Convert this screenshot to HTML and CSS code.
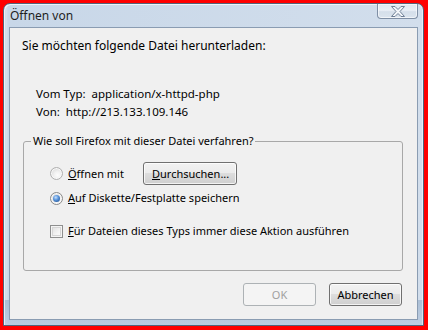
FILE: index.html
```html
<!DOCTYPE html>
<html lang="de">
<head>
<meta charset="utf-8">
<title>Öffnen von</title>
<link rel="stylesheet" href="styles.css">
</head>
<body>
<div class="window">
  <div class="titlebar">
    <span class="title">Öffnen von</span>
    <button class="close" aria-label="Schließen">
      <svg width="14" height="11" viewBox="0 0 14 11"><polygon points="0.5,0.5 4,0.5 7,3.5 10,0.5 13.5,0.5 9,5.5 13.5,10.5 10,10.5 7,7.5 4,10.5 0.5,10.5 5,5.5" fill="#f3f6fa" stroke="#6f7f95" stroke-width="1" stroke-linejoin="round"/></svg>
    </button>
  </div>
  <div class="client">
    <p class="intro">Sie möchten folgende Datei herunterladen:</p>
    <div class="info">
      <div class="info-row"><span>Vom Typ:</span><span>application/x-httpd-php</span></div>
      <div class="info-row"><span>Von:</span><span>http://213.133.109.146</span></div>
    </div>
    <fieldset class="group">
      <legend>Wie soll Firefox mit dieser Datei verfahren?</legend>
      <div class="opts">
        <div class="opt opt-first">
          <span class="radio"></span>
          <span class="opt-label wide"><u>Ö</u>ffnen mit</span>
          <button class="btn browse"><u>D</u>urchsuchen...</button>
        </div>
        <div class="opt opt-second">
          <span class="radio checked"></span>
          <span class="opt-label"><u>A</u>uf Diskette/Festplatte speichern</span>
        </div>
        <div class="opt opt-third">
          <span class="check"></span>
          <span class="opt-label"><u>F</u>ür Dateien dieses Typs immer diese Aktion ausführen</span>
        </div>
      </div>
    </fieldset>
    <div class="actions">
      <button class="btn action" disabled>OK</button>
      <button class="btn action">Abbrechen</button>
    </div>
  </div>
</div>
</body>
</html>
```
FILE: styles.css
```css
* { box-sizing: border-box; }
html, body { margin: 0; }
body {
  background: #f00;
  padding: 3px 4px 4px 3px;
  font: 11px/16px "Noto Sans", "Open Sans", sans-serif;
  color: #000;
  height: 330px;
}
.window {
  width: 421px;
  height: 323px;
  border: 1px solid #51647c;
  border-radius: 7px 7px 0 0;
  background:
    linear-gradient(to bottom, rgba(255,255,255,0) 0, rgba(255,255,255,0) 296px, rgba(140,165,195,0.55) 296px, rgba(175,195,218,0.6) 100%),
    linear-gradient(to right, #bccde2 0, #d7e2ef 2px, #c8d7e8 4px, #d2deec 100%);
  padding: 0 5px 5px 5px;
  display: flex;
  flex-direction: column;
  box-shadow: inset 1px 1px 0 rgba(255,255,255,0.7), inset -1px 0 0 rgba(255,255,255,0.5);
}
.titlebar {
  height: 23px;
  display: flex;
  justify-content: space-between;
  align-items: flex-start;
  flex: none;
}
.title {
  padding: 4px 0 0 1px;
  font-size: 12px;
  color: #1e1e1e;
}
.close {
  width: 41px;
  height: 15px;
  margin: 0;
  padding: 0;
  border: 1px solid #7f8fa5;
  border-top: none;
  border-radius: 0 0 4px 4px;
  background: linear-gradient(to bottom, #dfe7f1 0%, #e9eff6 45%, #d5dfea 55%, #dbe4ee 100%);
  box-shadow: inset 0 0 0 1px rgba(255,255,255,0.6);
  display: flex;
  align-items: center;
  justify-content: center;
}
.close svg { display: block; }
.client {
  flex: 1;
  background: #f0f0f0;
  border: 1px solid #8a9cb2;
  padding: 0 14px 0 12px;
  display: flex;
  flex-direction: column;
}
.intro {
  margin: 10px 0 0 0;
  font-size: 12px;
}
.info {
  margin: 31px 0 0 14px;
  font-size: 11.5px;
}
.info-row {
  height: 18px;
  line-height: 18px;
  display: flex;
  gap: 6px;
}
.group {
  margin: 12px 0 0 1px;
  padding: 13px 0 31px 0;
  border: 1px solid #a8a8a8;
  border-radius: 3px;
  min-width: 0;
}
.group legend {
  margin-left: 7px;
  padding: 0 2px;
  line-height: 16px;
}
.opts {
  padding-left: 26px;
}
.opt {
  display: flex;
  align-items: center;
  gap: 5px;
}
.opt-first { height: 23px; }
.opt-second { height: 16px; margin-top: 5px; }
.opt-third { height: 16px; margin-top: 17px; }
.opt-label.wide { width: 70px; }
.radio {
  width: 13px;
  height: 13px;
  border-radius: 50%;
  border: 1px solid #b0b0b0;
  background: radial-gradient(circle at 60% 65%, #fdfdfd 0, #f2f2f2 35%, #dadada 80%);
  box-shadow: inset 0 0 0 1px #f8f8f8;
  position: relative;
  flex: none;
}
.radio.checked {
  border-color: #8a8a8a;
}
.radio.checked::after {
  content: "";
  position: absolute;
  left: 2px;
  top: 2px;
  width: 7px;
  height: 7px;
  border-radius: 50%;
  background: radial-gradient(circle at 40% 35%, #c7e0fb 0, #5d97dd 40%, #1d4f91 90%);
}
.check {
  width: 13px;
  height: 13px;
  border: 1px solid #8e8f8f;
  background: linear-gradient(135deg, #dcdcdc 0%, #f4f4f4 60%, #fdfdfd 100%);
  box-shadow: inset 0 0 0 1px #f4f4f4, inset 0 0 0 2px #d6d6d6;
  flex: none;
}
.btn {
  font: inherit;
  height: 23px;
  margin: 0;
  padding: 0;
  color: #000;
  border: 1px solid #707070;
  border-radius: 3px;
  background: linear-gradient(to bottom, #f2f2f2 0%, #ebebeb 50%, #dddddd 50%, #cfcfcf 100%);
  box-shadow: inset 0 0 0 1px rgba(255,255,255,0.75);
  text-align: center;
}
.btn.browse {
  width: 94px;
  text-align: left;
  padding-left: 8px;
}
.btn:disabled {
  border-color: #adb2b5;
  background: #f4f4f4;
  box-shadow: none;
  color: #a0a0a0;
}
.actions {
  margin: 12px 1px 0 0;
  display: flex;
  justify-content: flex-end;
  gap: 13px;
}
.btn.action {
  width: 73px;
}
```
